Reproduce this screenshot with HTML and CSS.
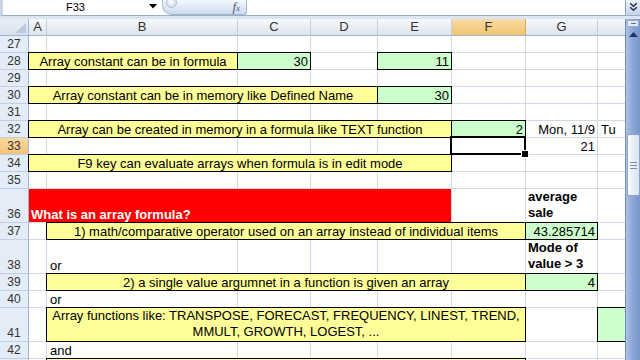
FILE: index.html
```html
<!DOCTYPE html>
<html>
<head>
<meta charset="utf-8">
<link rel="stylesheet" href="styles.css">
</head>
<body>
<div class="app">
  <div class="fbar">
    <div class="namebox">F33</div>
    <div class="dd"><svg width="8" height="5" viewBox="0 0 8 5"><path d="M0 0H8L4 4.5Z" fill="#000"/></svg></div>
    <div class="fxbtn"><span class="bubble"></span><span class="fx">f<span class="fxx">x</span></span></div>
    <div class="finput"></div>
    <div class="expand"><svg width="9" height="10" viewBox="0 0 9 10"><path d="M1.2 1.2L4.5 4.2L7.8 1.2M1.2 5.2L4.5 8.2L7.8 5.2" fill="none" stroke="#26344f" stroke-width="1.5"/></svg></div>
  </div>
  <div class="band"></div>
  <div class="main">
    <div class="grid-wrap">
      <table class="sheet">
        <colgroup>
          <col class="c-rh"><col class="c-a"><col class="c-b"><col class="c-c"><col class="c-d"><col class="c-e"><col class="c-f"><col class="c-g"><col class="c-h">
        </colgroup>
        <tr class="hdr">
          <th class="corner"><span class="tri"></span></th>
          <th class="ch">A</th><th class="ch">B</th><th class="ch">C</th><th class="ch">D</th><th class="ch">E</th><th class="ch sel">F</th><th class="ch">G</th><th class="ch"></th>
        </tr>
        <tr class="r"><td class="rh">27</td><td></td><td></td><td></td><td></td><td></td><td></td><td></td><td></td></tr>
        <tr class="r"><td class="rh">28</td><td colspan="2" class="y bx ctr">Array constant can be in formula</td><td class="g bx num">30</td><td></td><td class="g bx num">11</td><td></td><td></td><td></td></tr>
        <tr class="r"><td class="rh">29</td><td></td><td></td><td></td><td></td><td></td><td></td><td></td><td></td></tr>
        <tr class="r"><td class="rh">30</td><td colspan="4" class="y bx ctr">Array constant can be in memory like Defined Name</td><td class="g bx num">30</td><td></td><td></td><td></td></tr>
        <tr class="r"><td class="rh">31</td><td></td><td></td><td></td><td></td><td></td><td></td><td></td><td></td></tr>
        <tr class="r"><td class="rh">32</td><td colspan="5" class="y bx ctr">Array can be created in memory in a formula like TEXT function</td><td class="g bx num">2</td><td class="num">Mon, 11/9</td><td class="pl">Tu</td></tr>
        <tr class="r"><td class="rh sel">33</td><td></td><td></td><td></td><td></td><td></td><td class="cur"></td><td class="num">21</td><td></td></tr>
        <tr class="r"><td class="rh">34</td><td colspan="5" class="y bx ctr">F9 key can evaluate arrays when formula is in edit mode</td><td></td><td></td><td></td></tr>
        <tr class="r"><td class="rh">35</td><td></td><td></td><td></td><td></td><td></td><td></td><td></td><td></td></tr>
        <tr class="r2"><td class="rh">36</td><td colspan="5" class="red">What is an array formula?</td><td></td><td class="b wrap">average<br>sale</td><td></td></tr>
        <tr class="r"><td class="rh">37</td><td></td><td colspan="5" class="y bx ctr">1) math/comparative operator used on an array instead of individual items</td><td class="g bx num">43.285714</td><td></td></tr>
        <tr class="r2"><td class="rh">38</td><td></td><td class="pl">or</td><td></td><td></td><td></td><td></td><td class="b wrap">Mode of<br>value &gt; 3</td><td></td></tr>
        <tr class="r"><td class="rh">39</td><td></td><td colspan="5" class="y bx ctr">2) a single value argumnet in a function is given an array</td><td class="g bx num">4</td><td></td></tr>
        <tr class="r"><td class="rh">40</td><td></td><td class="pl">or</td><td></td><td></td><td></td><td></td><td></td><td></td></tr>
        <tr class="r2"><td class="rh">41</td><td></td><td colspan="5" class="y bx ctr wrap">Array functions like: TRANSPOSE, FORECAST, FREQUENCY, LINEST, TREND,<br>MMULT, GROWTH, LOGEST, ...</td><td></td><td class="g bx"></td></tr>
        <tr class="r"><td class="rh">42</td><td></td><td class="pl">and</td><td></td><td></td><td></td><td></td><td></td><td></td></tr>
        <tr class="r"><td class="rh"></td><td></td><td colspan="5" class="y bx"></td><td></td><td></td></tr>
      </table>
    </div>
    <div class="vscroll">
      <div class="split"><span></span></div>
      <div class="up"><svg width="9" height="5" viewBox="0 0 9 5"><path d="M0 5L4.5 0L9 5Z" fill="#1d3566"/></svg></div>
      <div class="thumb"><span></span><span></span><span></span></div>
    </div>
  </div>
</div>
</body>
</html>
```

FILE: styles.css
```css
* { box-sizing: border-box; }
html, body { margin: 0; padding: 0; background: #fff; }

.app {
  width: 640px;
  height: 360px;
  overflow: hidden;
  display: flex;
  flex-direction: column;
  font-family: "Liberation Sans", Arial, sans-serif;
  font-size: 13px;
  color: #000;
  background: #fff;
}

/* formula bar */
.fbar {
  flex: none;
  height: 16px;
  display: flex;
  border-left: 3px solid #c9d5e6;
  border-bottom: 1px solid #9cadc4;
  background: #fff;
}
.namebox {
  width: 145px;
  text-align: center;
  font-size: 11px;
  line-height: 14px;
}
.dd {
  width: 12px;
  padding-top: 4px;
  padding-left: 1px;
  line-height: 0;
}
.fxbtn {
  width: 85px;
  margin-left: 2px;
  display: flex;
  align-items: center;
  overflow: hidden;
  border: 1px solid #a3b6d2;
  border-top: none;
  border-radius: 0 0 3px 10px;
  background: linear-gradient(#f5f8fc, #cddbee);
}
.bubble {
  align-self: flex-start;
  width: 11px;
  height: 11px;
  margin-top: -3px;
  margin-left: 3px;
  border-radius: 50%;
  border: 1px solid #aebbd0;
  background: radial-gradient(circle at 40% 40%, #ffffff, #c9d3e1);
}
.fx {
  margin-left: auto;
  margin-right: 6px;
  font-family: "Liberation Serif", "Times New Roman", serif;
  font-style: italic;
  font-size: 13px;
  line-height: 13px;
  color: #4d5a72;
}
.fxx { font-size: 9px; }
.finput { flex: 1; background: #fff; }
.expand {
  width: 15px;
  display: flex;
  justify-content: center;
  padding-top: 2px;
  border-left: 1px solid #8ea6c8;
  background: linear-gradient(#eaf0f8, #c3d4ec);
}

.band { flex: none; height: 3px; background: #dce6f3; }

/* sheet */
.main { flex: 1; display: flex; min-height: 0; }
.grid-wrap { width: 625px; height: 341px; overflow: hidden; flex: none; }

.sheet {
  border-collapse: separate;
  border-spacing: 0;
  table-layout: fixed;
  width: 670px;
}
.c-rh { width: 29px; }
.c-a { width: 18px; }
.c-b { width: 191px; }
.c-c { width: 73px; }
.c-d { width: 67px; }
.c-e { width: 74px; }
.c-f { width: 74px; }
.c-g { width: 72px; }
.c-h { width: 72px; }

.hdr { height: 17px; }
.r { height: 17px; }
.r2 { height: 34px; }

.sheet td {
  border-right: 1px solid #d0d7e5;
  border-bottom: 1px solid #d0d7e5;
  padding: 0 2px;
  vertical-align: bottom;
  line-height: 15px;
  white-space: nowrap;
  overflow: hidden;
}

.ch {
  padding: 0;
  font-weight: normal;
  font-size: 13px;
  line-height: 16px;
  color: #333;
  text-align: center;
  vertical-align: middle;
  border-right: 1px solid #c3cedd;
  border-bottom: 1px solid #9eb6ce;
  background: linear-gradient(#f7f9fc, #dde4ee);
}
.ch.sel {
  background: linear-gradient(#f9dca8, #f2c46f);
  border-right-color: #d9a95a;
}
.corner {
  padding: 0 2px 2px 0;
  font-size: 0;
  line-height: 0;
  text-align: right;
  vertical-align: bottom;
  border-right: 1px solid #9eb6ce;
  border-bottom: 1px solid #9eb6ce;
  background: linear-gradient(#e8eef6, #d8e2ef);
}
.tri {
  display: inline-block;
  width: 0;
  height: 0;
  border-left: 11px solid transparent;
  border-bottom: 10px solid #bccade;
}

.sheet td.rh {
  padding: 0;
  text-align: center;
  font-size: 12px;
  color: #333;
  background: #e4ecf7;
  border-right: 1px solid #9eb6ce;
  border-bottom: 1px solid #c0cfe2;
}
.sheet td.rh.sel { background: linear-gradient(#f9d8a0, #f3c47a); }

.y { background: #ffff99; }
.g { background: #ccffcc; }
.red { background: #ff0000; color: #fff; font-weight: bold; }
.sheet td.bx {
  border-right: 1px solid #000;
  border-bottom: 1px solid #000;
  box-shadow: -1px 0 0 #000, 0 -1px 0 #000, -1px -1px 0 #000;
}
.ctr { text-align: center; }
.num { text-align: right; }
.b { font-weight: bold; }
.sheet td.pl { padding-left: 3px; }
.sheet td.wrap { line-height: 16px; padding-bottom: 1px; }

.sheet td.cur { position: relative; overflow: visible; }
.cur::after {
  content: "";
  position: absolute;
  left: -2px;
  top: -2px;
  right: -1px;
  bottom: -1px;
  border: 2px solid #000;
}
.cur::before {
  content: "";
  position: absolute;
  right: -4px;
  bottom: -4px;
  width: 6px;
  height: 6px;
  background: #000;
  border: 1px solid #fff;
  z-index: 1;
}

/* vertical scrollbar */
.vscroll {
  flex: none;
  width: 15px;
  display: flex;
  flex-direction: column;
  align-items: center;
  border-left: 1px solid #6f8ec4;
  background: linear-gradient(to right, #aec2e5, #8aa5d5 50%, #7896cb);
}
.split {
  width: 12px;
  height: 7px;
  margin-top: 1px;
  display: flex;
  align-items: center;
  justify-content: center;
  border: 1px solid #97acd0;
  border-radius: 1px;
  background: #e4ebf6;
}
.split span { width: 5px; height: 1px; background: #5c6f93; }
.up { margin-top: 5px; line-height: 0; }
.thumb {
  width: 13px;
  height: 62px;
  margin-top: 97px;
  display: flex;
  flex-direction: column;
  align-items: center;
  justify-content: center;
  gap: 2px;
  border: 1px solid #8ea4ca;
  border-radius: 2px;
  background: linear-gradient(to right, #f8fafd, #d9e3f1);
}
.thumb span { width: 7px; height: 1px; background: #7c8cab; }
```
